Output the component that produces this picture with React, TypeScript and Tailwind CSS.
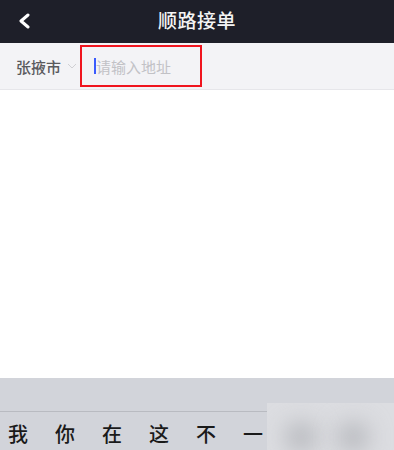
import React from "react";

export default function App() {
  const font = { fontFamily: '"Noto Sans CJK SC", "Noto Sans", sans-serif' };
  const keys = ["我", "你", "在", "这", "不", "一"];
  return (
    <div className="w-[394px] h-[450px] overflow-hidden flex flex-col bg-white" style={font}>
      <div className="h-[43px] shrink-0 bg-[#1e1f29] relative flex items-center justify-center">
        <svg className="absolute left-[17px] top-[13px]" width="14" height="16" viewBox="0 0 14 16">
          <path d="M11 2 L4 8 L11 14" stroke="#ffffff" strokeWidth="3" fill="none" strokeLinecap="round" strokeLinejoin="round" />
        </svg>
        <span className="text-[#f4f4f4] text-[19px] font-medium leading-none tracking-[0.5px] -mt-[4px]">顺路接单</span>
      </div>
      <div className="h-[47px] shrink-0 bg-[#f3f3f6] border-b border-[#e6e6ea] flex items-center relative">
        <span className="ml-[16px] text-[15px] font-medium text-[#5a5a5e] leading-none">张掖市</span>
        <svg className="ml-[6px]" width="10" height="6" viewBox="0 0 10 6">
          <path d="M1 1 L5 5 L9 1" stroke="#d0d0d4" strokeWidth="1" fill="none" />
        </svg>
        <div className="ml-[3px] w-[122px] h-[42px] border-2 border-[#f0141e] flex items-center">
          <div className="w-[2px] h-[16px] bg-[#3b5bfd] ml-[12px]" />
          <span className="text-[15px] text-[#c2c2c6] leading-none">请输入地址</span>
        </div>
      </div>
      <div className="flex-1 bg-white" />
      <div className="h-[72px] shrink-0 bg-[#d2d4da] relative">
        <div className="h-[34px] w-[267px] border-b border-[#b9bbc1]" />
        <div className="flex pl-[8px] gap-[27px] pt-[12px] text-[20px] font-medium leading-none text-[#1a1a1a]">
          {keys.map((k) => (
            <span key={k}>{k}</span>
          ))}
        </div>
        <div className="absolute left-[267px] top-[25px] w-[127px] h-[47px] bg-[#dcdde1] overflow-hidden">
          <div className="absolute left-[20px] top-[22px] w-[28px] h-[24px] rounded-full bg-[#a9abb0] blur-md" />
          <div className="absolute left-[72px] top-[22px] w-[28px] h-[24px] rounded-full bg-[#a9abb0] blur-md" />
        </div>
      </div>
    </div>
  );
}
